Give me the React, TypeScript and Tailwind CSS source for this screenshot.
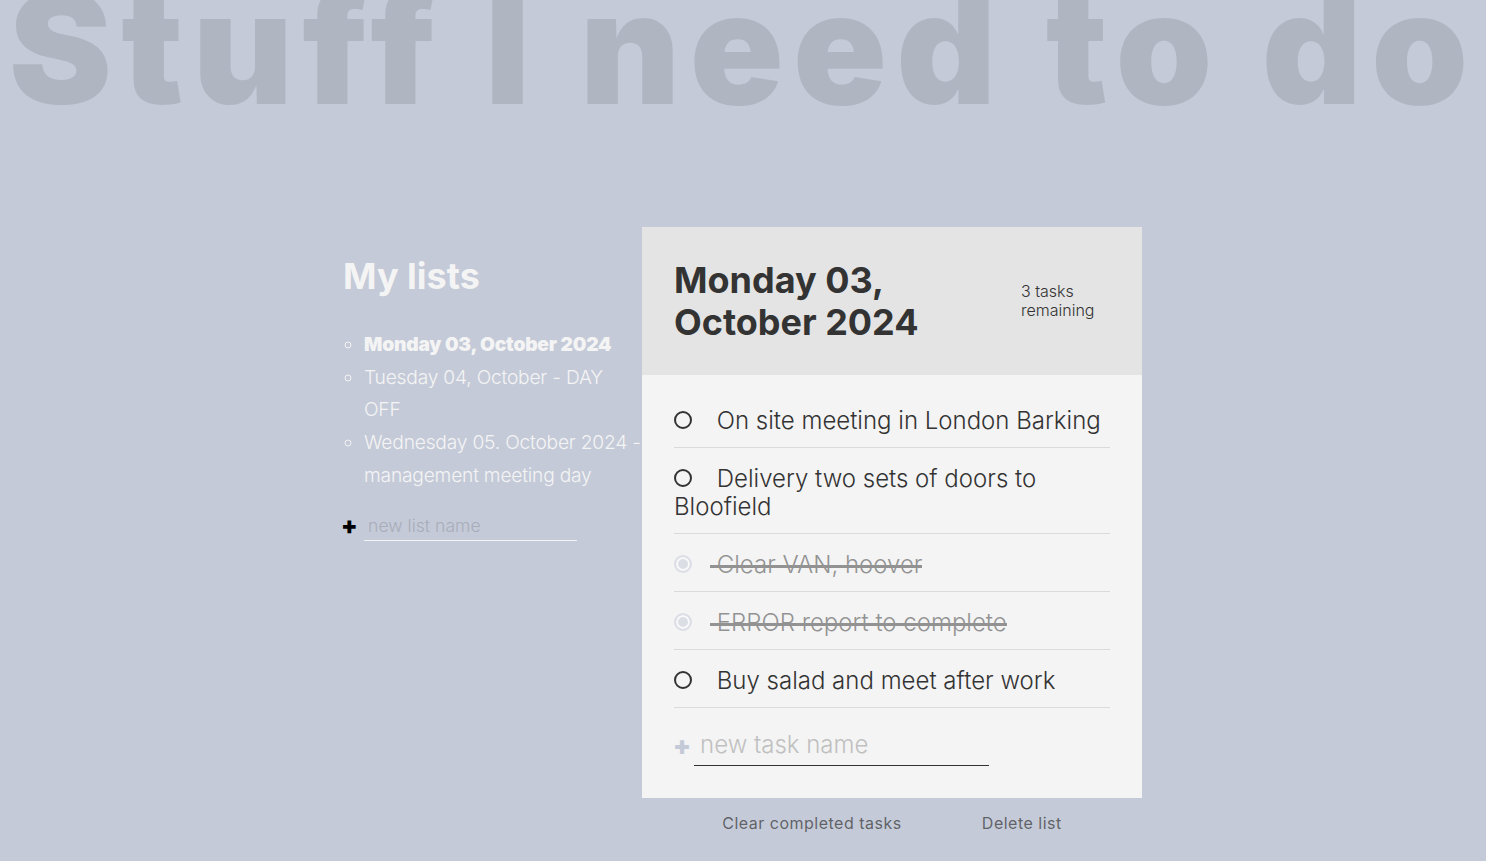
import React from "react";

type Task = { name: string; done: boolean };

const tasks: Task[] = [
  { name: "On site meeting in London Barking", done: false },
  { name: "Delivery two sets of doors to Bloofield", done: false },
  { name: "Clear VAN, hoover", done: true },
  { name: "ERROR report to complete", done: true },
  { name: "Buy salad and meet after work", done: false },
];

export default function App() {
  return (
    <div className="min-h-screen overflow-hidden bg-[#c4cad8] font-['Inter',sans-serif] font-light text-[#f4f4f4]">
      <h1 className="mt-[-30px] mb-[102px] h-[155px] whitespace-nowrap text-center text-[155px] leading-[155px] font-black tracking-[9.3px] text-black/10">
        Stuff I need to do
      </h1>
      <div className="grid grid-cols-[343px_299px_500px_1fr]">
        <div className="col-start-2">
          <h2 className="mt-[28px] mb-[31px] text-[36px] leading-[42px] font-bold">My lists</h2>
          <ul className="list-[circle] pl-[21px] text-[19.2px] leading-[32.64px] tracking-[-0.2px]">
            <li className="font-black">Monday 03, October 2024</li>
            <li>Tuesday 04, October - DAY OFF</li>
            <li>Wednesday 05. October 2024 - management meeting day</li>
          </ul>
          <form className="mt-[19px] flex items-center">
            <button type="button" className="-ml-[2px] mr-[6px] text-[24px] leading-none font-black text-black">
              +
            </button>
            <input
              placeholder="new list name"
              className="w-[213px] border-b border-[#f4f4f4] bg-transparent px-[4.4px] py-[4.4px] text-[17.6px] leading-[21px] outline-none placeholder:text-[#a9adb9]"
            />
          </form>
        </div>
        <div className="col-start-3">
          <div className="bg-[#f4f4f4] text-[#333]">
            <div className="flex items-center justify-between bg-[#e4e4e4] p-8">
              <h2 className="mr-[36px] flex-1 text-[36px] leading-[42px] font-bold">Monday 03, October 2024</h2>
              <p className="w-[89px] text-[16px] leading-[19px] font-light">3 tasks remaining</p>
            </div>
            <div className="p-8">
              {tasks.map((t) => (
                <div key={t.name} className="mb-[17px] border-b border-black/10 pb-[12px] text-[24px] leading-[28px]">
                  {t.done ? (
                    <label className="relative inline-block opacity-50">
                      <span className="relative -top-[2px] mr-[18px] inline-block h-[18px] w-[18px] rounded-full border-2 border-[#c4cad8] bg-[#c4cad8] align-middle shadow-[inset_0_0_0_2px_white]" />{" "}
                      {t.name}
                      <span className="absolute top-1/2 right-0 left-[36px] h-[3px] bg-[#333]" />
                    </label>
                  ) : (
                    <label className="relative">
                      <span className="relative -top-[2px] mr-[18px] inline-block h-[18px] w-[18px] rounded-full border-2 border-[#333] align-middle" />{" "}
                      {t.name}
                    </label>
                  )}
                </div>
              ))}
              <form className="flex items-center">
                <button type="button" className="-ml-[1px] mr-[3px] text-[26px] leading-none font-black text-[#c4cad8]">
                  +
                </button>
                <input
                  placeholder="new task name"
                  className="w-[295px] border-b border-[#333] bg-transparent p-[6px] text-[24px] leading-[28px] outline-none placeholder:text-[#c0c0c0]"
                />
              </form>
            </div>
          </div>
          <div className="mt-[16px] flex justify-evenly text-[16px] leading-[19px] font-normal tracking-[0.5px] text-[#333]/70">
            <button type="button">Clear completed tasks</button>
            <button type="button">Delete list</button>
          </div>
        </div>
      </div>
    </div>
  );
}
